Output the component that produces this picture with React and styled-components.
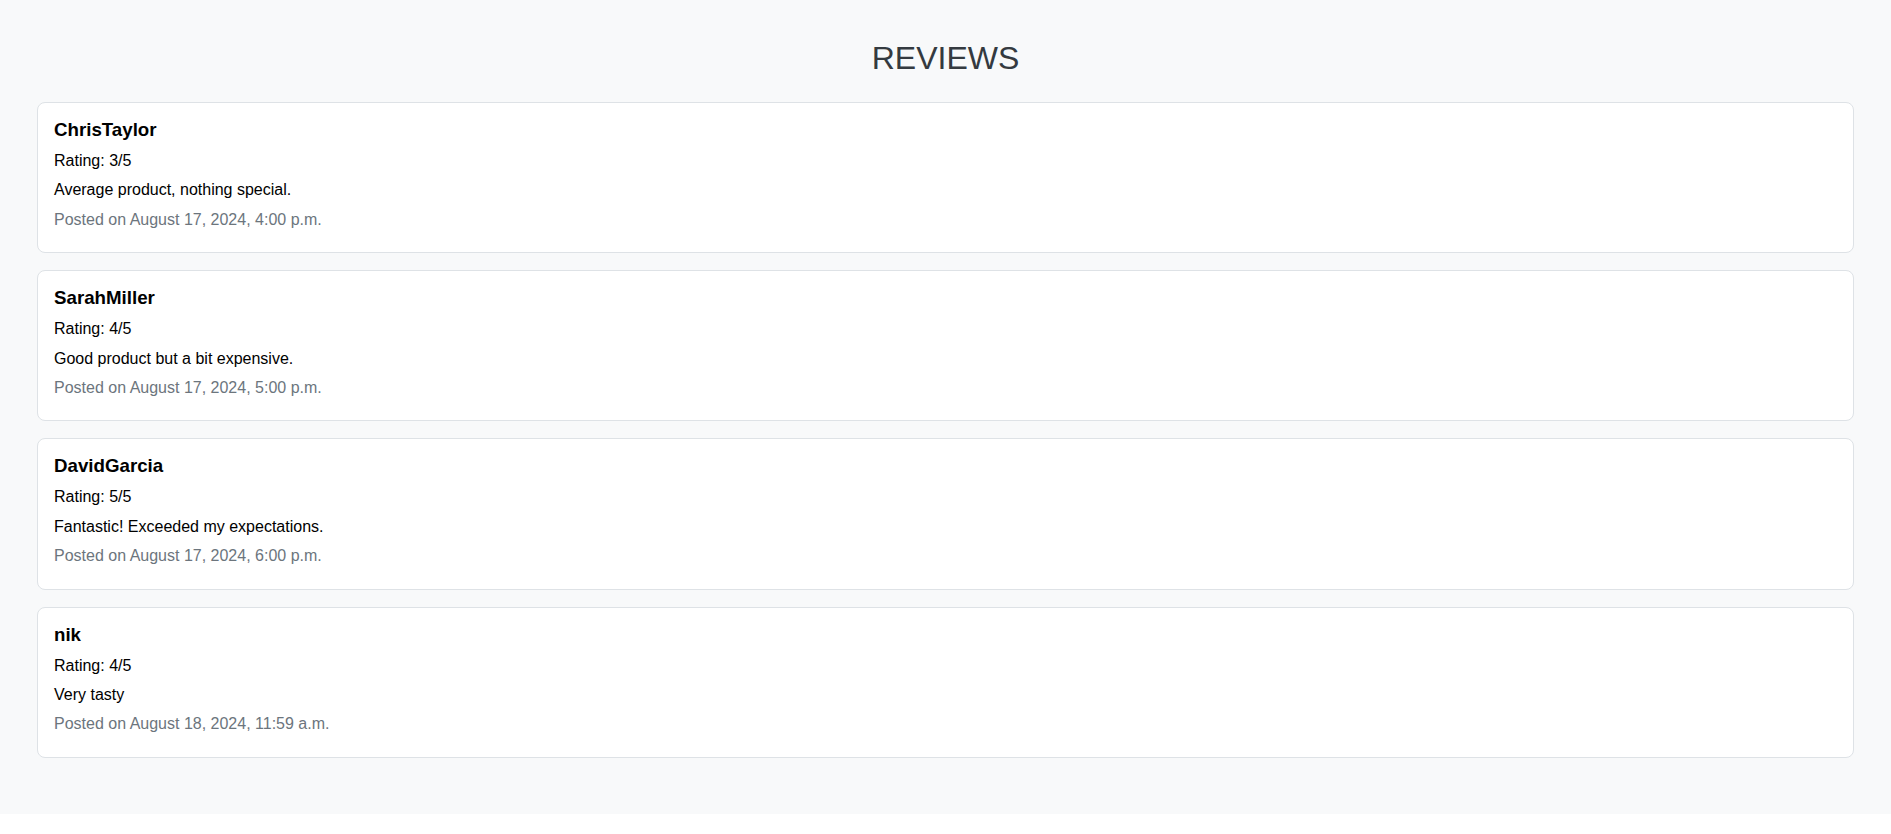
import React from 'react'
import styled, {createGlobalStyle} from 'styled-components'

const GlobalStyle = createGlobalStyle`
  body {
    margin: 0;
    background: #fff;
    font-family: "Liberation Sans", Arial, sans-serif;
  }
`

const Page = styled.div`
  background: #f8f9fa;
  padding: 40px 37px 56px 37px;
`

const Title = styled.h1`
  margin: 0 0 25px 0;
  text-align: center;
  font-size: 32px;
  font-weight: 400;
  color: #343a40;
`

const List = styled.div`
  display: flex;
  flex-direction: column;
  gap: 17px;
`

const Card = styled.div`
  background: #fff;
  border: 1px solid #dee2e6;
  border-radius: 8px;
  padding: 16px 16px 13px 16px;
`

const Name = styled.h3`
  margin: 0;
  font-size: 18.72px;
  font-weight: 700;
  color: #000;
`

const Line = styled.p`
  margin: 10px 0;
  font-size: 16px;
  line-height: 19.4px;
  color: ${p => (p.$muted ? '#6c757d' : '#000')};
`

const reviews = [
    {user: 'ChrisTaylor', rating: 3, text: 'Average product, nothing special.', date: 'August 17, 2024, 4:00 p.m.'},
    {user: 'SarahMiller', rating: 4, text: 'Good product but a bit expensive.', date: 'August 17, 2024, 5:00 p.m.'},
    {user: 'DavidGarcia', rating: 5, text: 'Fantastic! Exceeded my expectations.', date: 'August 17, 2024, 6:00 p.m.'},
    {user: 'nik', rating: 4, text: 'Very tasty', date: 'August 18, 2024, 11:59 a.m.'},
]

export default function App() {
    return (
        <>
            <GlobalStyle/>
            <Page>
                <Title>REVIEWS</Title>
                <List>
                    {reviews.map(r => (
                        <Card key={r.user}>
                            <Name>{r.user}</Name>
                            <Line>Rating: {r.rating}/5</Line>
                            <Line>{r.text}</Line>
                            <Line $muted>Posted on {r.date}</Line>
                        </Card>
                    ))}
                </List>
            </Page>
        </>
    )
}
